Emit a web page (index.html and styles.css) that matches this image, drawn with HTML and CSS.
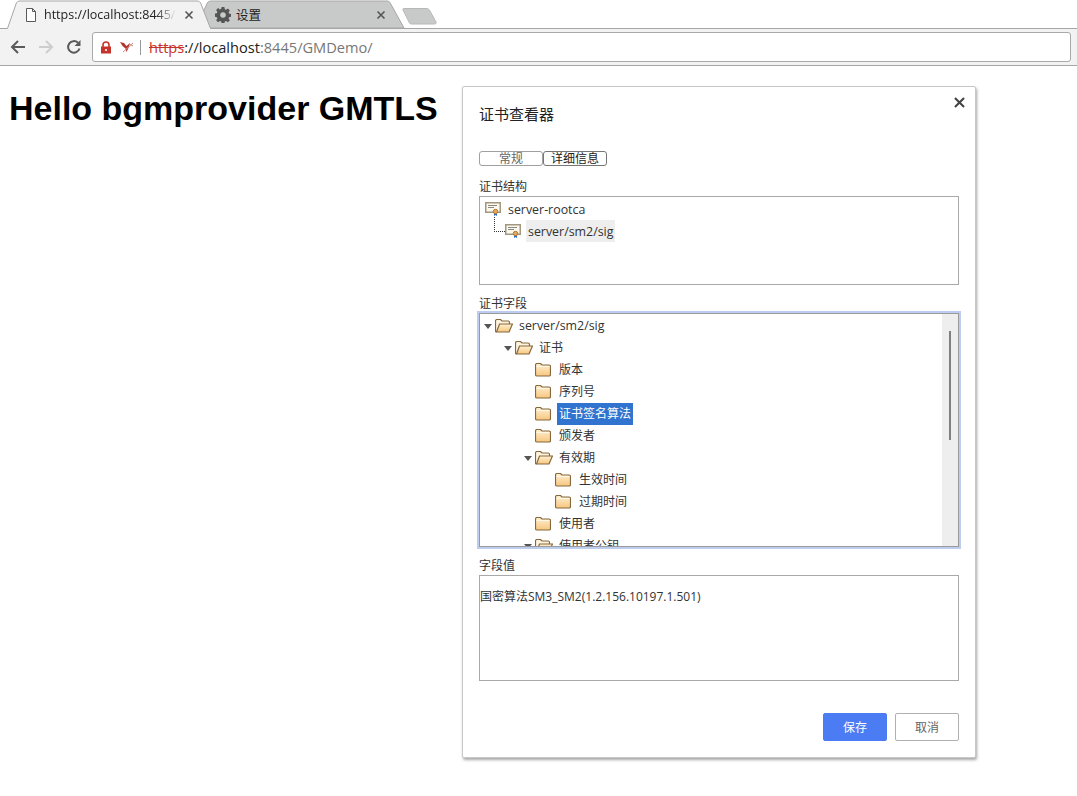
FILE: index.html
```html
<!DOCTYPE html>
<html lang="en">
<head>
    <meta charset="UTF-8">
    <meta name="viewport" content="width=device-width, initial-scale=1.0">
    <title>GMDemo</title>
    <link rel="stylesheet" href="styles.css">
</head>
<body>
    <svg class="sprites" width="0" height="0" aria-hidden="true">
        <defs>
            <linearGradient id="folder-fill" x1="0" y1="0" x2="0" y2="1">
                <stop offset="0" stop-color="#fff0d2"/>
                <stop offset="1" stop-color="#f7c67e"/>
            </linearGradient>
        </defs>
        <symbol id="folder" viewBox="0 0 16 14">
            <path d="M2 13 a1.500 1.500 0 0 1-1.500-1.500 V2 a1.500 1.500 0 0 1 1.500-1.500 h3.500 l1.500 1.500 h7 a1.500 1.500 0 0 1 1.500 1.500 v8 a1.500 1.500 0 0 1-1.500 1.500 z" fill="url(#folder-fill)" stroke="#86683c" stroke-width="1.200"/>
            <path d="M1.500 3.500 h13" stroke="#fff8e8"/>
        </symbol>
        <symbol id="folder-open" viewBox="0 0 18 14">
            <path d="M1.500 13 a1 1 0 0 1-1-1 V2 a1.500 1.500 0 0 1 1.500-1.500 h3.500 l1.500 1.500 h6 a1.500 1.500 0 0 1 1.500 1.500 v1.500" fill="#fff4df" stroke="#86683c" stroke-width="1.200"/>
            <path d="M1.500 13 L4.500 5 H17.500 L14 13 z" fill="url(#folder-fill)" stroke="#86683c" stroke-width="1.200" stroke-linejoin="round"/>
        </symbol>
        <symbol id="cert" viewBox="0 0 16 14">
            <rect x="0.750" y="0.750" width="14.500" height="9.500" fill="#fbf8f0" stroke="#a3977f" stroke-width="1.500"/>
            <path d="M3 3.500 h9 M3 5.500 h6" stroke="#8a8a80"/>
            <path d="M9 10 v4 l1.500-1 1.500 1 v-4" fill="#2b6cc4"/>
            <circle cx="10.500" cy="9.500" r="2.200" fill="#e6a95c" stroke="#b8752a"/>
        </symbol>
        <symbol id="x-mark" viewBox="0 0 10 10">
            <path d="M1.500 1.500 L8.500 8.500 M8.500 1.500 L1.500 8.500" fill="none" stroke="currentColor" stroke-width="1.600"/>
        </symbol>
    </svg>

    <header class="browser">
        <div class="tabstrip">
            <div class="tab tab-active">
                <svg class="tab-shape" viewBox="0 0 206 29" preserveAspectRatio="none"><path d="M0 29 L1.500 28.500 L10 4 C10.500 2 12 1 14 1 H191 C193 1 194.500 2 195 4 L204.500 28.500 L206 29" fill="#f2f2f2" stroke="#a6a6a6"/></svg>
                <svg class="tab-icon" viewBox="0 0 16 16"><path d="M3.500 1.500 h6 l3 3 v10 h-9 z M9.500 1.500 v3 h3" fill="#fff" stroke="#5a5a5a"/></svg>
                <span class="tab-title tab-fade">https://localhost:8445/GMDemo/</span>
                <svg class="tab-close"><use href="#x-mark"/></svg>
            </div>
            <div class="tab tab-back">
                <svg class="tab-shape" viewBox="0 0 209 29" preserveAspectRatio="none"><path d="M0 28 L11 3.500 C11.500 2 13 1 15 1 H191 C193 1 194 2 194.500 3.500 L208 28 z" fill="#c8cac9" stroke="#a6a6a6"/></svg>
                <svg class="tab-icon" viewBox="0 0 16 16"><path fill="#555" fill-rule="evenodd" d="M6.600 0 h2.800 l.4 2.200 1.300.6 1.800-1.300 2 2-1.300 1.800.6 1.300 2.200.4 v2.800 l-2.200.4-.6 1.300 1.300 1.800-2 2-1.800-1.300-1.300.6-.4 2.200 H6.600 l-.4-2.200-1.300-.6-1.800 1.300-2-2 1.300-1.800-.6-1.300-2.200-.4 V6.600 l2.200-.4.600-1.300-1.300-1.800 2-2 1.800 1.300 1.300-.6 z M8 5.200 a2.800 2.800 0 1 0 .01 0 z"/></svg>
                <span class="tab-title">设置</span>
                <svg class="tab-close"><use href="#x-mark"/></svg>
            </div>
            <svg class="new-tab" viewBox="0 0 36 18" width="36" height="18"><path d="M2 1.500 H24 C26 1.500 27 2 28 4 L34 15 C34.500 16 34 17 32 17 H10 C8 17 7.500 16.500 7 15 L1 3 C.5 2 1 1.500 2 1.500 z" fill="#c8cac9" stroke="#b8b8b8"/></svg>
        </div>
        <div class="toolbar">
            <svg class="nav-icon" viewBox="0 0 16 16"><path d="M15 8 H2 M8 2 L2 8 l6 6" fill="none" stroke="#5a5a5a" stroke-width="2"/></svg>
            <svg class="nav-icon" viewBox="0 0 16 16"><path d="M1 8 H14 M8 2 l6 6-6 6" fill="none" stroke="#cdcdcd" stroke-width="2"/></svg>
            <svg class="nav-icon" viewBox="0 0 16 16"><path d="M13.500 9.500 A5.800 5.800 0 1 1 12 3.800" fill="none" stroke="#5a5a5a" stroke-width="2"/><path d="M14.500 1 v6 h-6 z" fill="#5a5a5a"/></svg>
            <div class="omnibox">
                <svg class="lock" viewBox="0 0 12 13" width="12" height="13"><path d="M3 6 V4 a3 3 0 0 1 6 0 V6" fill="none" stroke="#c5332b" stroke-width="1.600"/><rect x="1" y="5.500" width="10" height="7" fill="#c5332b"/><rect x="5" y="8" width="2" height="2" fill="#f6d5d2"/></svg>
                <svg class="bird" viewBox="0 0 14 12" width="14" height="12"><path d="M0 1 L4 2 L6.500 5 L10 2 L8.500 7 L6.500 11 L5.500 7.500 L2.500 5 z" fill="#b5352c"/><path d="M3 11 L13 2 M9 3 l4 2" stroke="#cf8a84" fill="none"/></svg>
                <span class="omni-sep"></span>
                <span class="url"><s class="url-scheme">https</s>://localhost<span class="url-rest">:8445/GMDemo/</span></span>
            </div>
        </div>
    </header>

    <main>
        <h1>Hello bgmprovider GMTLS</h1>
    </main>

    <div class="dialog">
        <svg class="dialog-close"><use href="#x-mark"/></svg>
        <div class="dialog-title">证书查看器</div>

        <div class="tab-buttons">
            <button class="tab-btn tab-btn-off">常规</button>
            <button class="tab-btn">详细信息</button>
        </div>

        <div class="field-label">证书结构</div>
        <div class="box box-chain">
            <div class="chain-row">
                <svg class="cert-icon"><use href="#cert"/></svg>
                <span class="chain-text latin">server-rootca</span>
            </div>
            <div class="chain-row chain-child">
                <span class="chain-line"></span>
                <svg class="cert-icon"><use href="#cert"/></svg>
                <span class="chain-text latin">server/sm2/sig</span>
            </div>
        </div>

        <div class="field-label">证书字段</div>
        <div class="box box-fields">
            <div class="tree">
                <div class="row lvl-0"><i class="arrow"></i><svg class="ico-open"><use href="#folder-open"/></svg><span class="row-text latin">server/sm2/sig</span></div>
                <div class="row lvl-1"><i class="arrow"></i><svg class="ico-open"><use href="#folder-open"/></svg><span class="row-text">证书</span></div>
                <div class="row lvl-2"><svg class="ico"><use href="#folder"/></svg><span class="row-text">版本</span></div>
                <div class="row lvl-2"><svg class="ico"><use href="#folder"/></svg><span class="row-text">序列号</span></div>
                <div class="row lvl-2"><svg class="ico"><use href="#folder"/></svg><span class="row-text row-selected">证书签名算法</span></div>
                <div class="row lvl-2"><svg class="ico"><use href="#folder"/></svg><span class="row-text">颁发者</span></div>
                <div class="row lvl-2"><i class="arrow"></i><svg class="ico-open"><use href="#folder-open"/></svg><span class="row-text">有效期</span></div>
                <div class="row lvl-3"><svg class="ico"><use href="#folder"/></svg><span class="row-text">生效时间</span></div>
                <div class="row lvl-3"><svg class="ico"><use href="#folder"/></svg><span class="row-text">过期时间</span></div>
                <div class="row lvl-2"><svg class="ico"><use href="#folder"/></svg><span class="row-text">使用者</span></div>
                <div class="row lvl-2"><i class="arrow"></i><svg class="ico-open"><use href="#folder-open"/></svg><span class="row-text">使用者公钥</span></div>
            </div>
            <div class="scroll-track"><div class="scroll-thumb"></div></div>
        </div>

        <div class="field-label">字段值</div>
        <div class="box box-value latin">国密算法SM3_SM2(1.2.156.10197.1.501)</div>

        <div class="dialog-actions">
            <button class="btn btn-primary">保存</button>
            <button class="btn">取消</button>
        </div>
    </div>
</body>
</html>
```

FILE: styles.css
```css
/* General */
body {
    margin: 0;
    background-color: #fff;
    font-family: "Open Sans", "Noto Sans CJK SC", sans-serif;
    color: #333;
}

.sprites {
    position: absolute;
}

.latin {
    font-size: 12.4px;
}

/* Browser chrome */
.browser {
    height: 66px;
}

.tabstrip {
    display: flex;
    height: 28px;
    padding-left: 6px;
    align-items: flex-start;
}

.tab {
    position: relative;
    display: flex;
    align-items: center;
    box-sizing: border-box;
    height: 29px;
    font-size: 12.5px;
    color: #222;
}

.tab-active {
    width: 206px;
    z-index: 2;
    padding: 0 18px 0 17px;
}

.tab-back {
    width: 209px;
    margin-left: -16px;
    z-index: 1;
    padding: 0 19px 0 19px;
}

.tab-shape {
    position: absolute;
    left: 0;
    top: 0;
    width: 100%;
    height: 100%;
}

.tab-icon {
    position: relative;
    width: 16px;
    height: 16px;
    margin-right: 5px;
    flex: none;
}

.tab-title {
    position: relative;
    flex: 1;
    white-space: nowrap;
    overflow: hidden;
}

.tab-fade {
    -webkit-mask-image: linear-gradient(to right, #000 85%, transparent 100%);
    mask-image: linear-gradient(to right, #000 85%, transparent 100%);
}

.tab-close {
    position: relative;
    width: 10px;
    height: 10px;
    margin-left: 8px;
    flex: none;
    color: #555;
}

.new-tab {
    margin: 7px 0 0 -3px;
}

.toolbar {
    display: flex;
    align-items: center;
    box-sizing: border-box;
    height: 38px;
    padding: 0 6px 0 10px;
    background-color: #f2f2f2;
    border-top: 1px solid #a6a6a6;
    border-bottom: 1px solid #a6a6a6;
    gap: 12px;
}

.nav-icon {
    width: 16px;
    height: 16px;
    flex: none;
}

.omnibox {
    display: flex;
    align-items: center;
    flex: 1;
    height: 28px;
    margin-left: -2px;
    padding-left: 7px;
    background-color: #fff;
    border: 1px solid #a9a9a9;
    border-radius: 3px;
}

.bird {
    margin-left: 8px;
}

.omni-sep {
    width: 1px;
    height: 15px;
    margin: 0 8px 0 6px;
    background-color: #999;
}

.url {
    font-size: 14.6px;
    color: #222;
}

.url-scheme {
    color: #c5332b;
}

.url-rest {
    color: #777;
}

/* Page */
h1 {
    margin: 23px 9px;
    font-family: "Liberation Sans", Arial, sans-serif;
    font-size: 34px;
    font-weight: bold;
    color: #000;
}

/* Certificate dialog */
.dialog {
    position: absolute;
    left: 462px;
    top: 86px;
    box-sizing: border-box;
    width: 514px;
    height: 672px;
    padding: 16px;
    background-color: #fff;
    border: 1px solid #c8c8c8;
    border-radius: 2px;
    box-shadow: 1px 2px 3px rgba(0, 0, 0, 0.35);
}

.dialog-close {
    position: absolute;
    right: 9px;
    top: 9px;
    width: 13px;
    height: 13px;
    color: #444;
}

.dialog-title {
    height: 22px;
    line-height: 22px;
    font-size: 15px;
    color: #222;
}

.tab-buttons {
    display: flex;
    margin-top: 26px;
    padding-bottom: 2px;
}

.tab-btn {
    width: 64px;
    height: 15px;
    padding: 0;
    background-color: #fff;
    border: 1px solid #767676;
    border-radius: 3px;
    font-family: inherit;
    font-size: 12px;
    line-height: 13px;
    color: #222;
}

.tab-btn-off {
    color: #666;
    border-color: #a0a0a0;
}

.field-label {
    height: 16px;
    line-height: 16px;
    margin-top: 11px;
    margin-bottom: 1px;
    font-size: 12px;
    color: #333;
}

.box {
    box-sizing: border-box;
    width: 480px;
    border: 1px solid #a9a9a9;
    font-size: 12px;
    color: #333;
}

.box-chain {
    height: 89px;
    padding: 1px 0 0 5px;
}

.chain-row {
    display: flex;
    align-items: center;
    height: 22px;
}

.chain-child {
    position: relative;
    padding-left: 20px;
}

.chain-line {
    position: absolute;
    left: 9px;
    top: -3px;
    width: 10px;
    height: 14px;
    border-left: 1px dotted #333;
    border-bottom: 1px dotted #333;
}

.cert-icon {
    width: 16px;
    height: 14px;
    flex: none;
}

.chain-text {
    display: flex;
    align-items: center;
    height: 22px;
    margin-left: 5px;
    padding: 0 2px;
}

.chain-child .chain-text {
    margin-left: 5px;
    background-color: #eee;
}

.box-fields {
    display: flex;
    height: 234px;
    overflow: hidden;
    border-color: #9a9a9a;
    box-shadow: 0 0 0 2px #bccdf0;
}

.tree {
    flex: 1;
    height: 232px;
    overflow: hidden;
}

.row {
    display: flex;
    align-items: center;
    height: 22px;
}

.lvl-0 { padding-left: 4px; }
.lvl-1 { padding-left: 24px; }
.lvl-2 { padding-left: 44px; }
.lvl-3 { padding-left: 64px; }

.row:first-child {
    /* first row sits a little lower than the box top */
    margin-top: 1px;
}

.arrow {
    width: 0;
    height: 0;
    margin-right: 3px;
    border-left: 4px solid transparent;
    border-right: 4px solid transparent;
    border-top: 5px solid #555;
    flex: none;
}

.ico {
    width: 16px;
    height: 14px;
    margin-left: 11px;
    flex: none;
}

.ico-open {
    width: 18px;
    height: 14px;
    flex: none;
}

.row-text {
    margin-left: 4px;
    padding: 0 2px;
    line-height: 22px;
}

.ico + .row-text {
    margin-left: 6px;
}

.row-selected {
    background-color: #3074d0;
    color: #fff;
}

.scroll-track {
    width: 16px;
    height: 100%;
    background-color: #eee;
    flex: none;
}

.scroll-thumb {
    width: 2px;
    height: 109px;
    margin: 17px 0 0 7px;
    background-color: #808080;
}

.box-value {
    height: 106px;
    padding-top: 13px;
    line-height: 16px;
}

.dialog-actions {
    display: flex;
    justify-content: flex-end;
    gap: 8px;
    margin-top: 32px;
}

.btn {
    width: 64px;
    height: 28px;
    padding: 0;
    background-color: #fff;
    border: 1px solid #b0b0b0;
    border-radius: 2px;
    font-family: inherit;
    font-size: 12px;
    color: #666;
}

.btn-primary {
    background-color: #4c7cf3;
    border-color: #4c7cf3;
    color: #fff;
}
```
